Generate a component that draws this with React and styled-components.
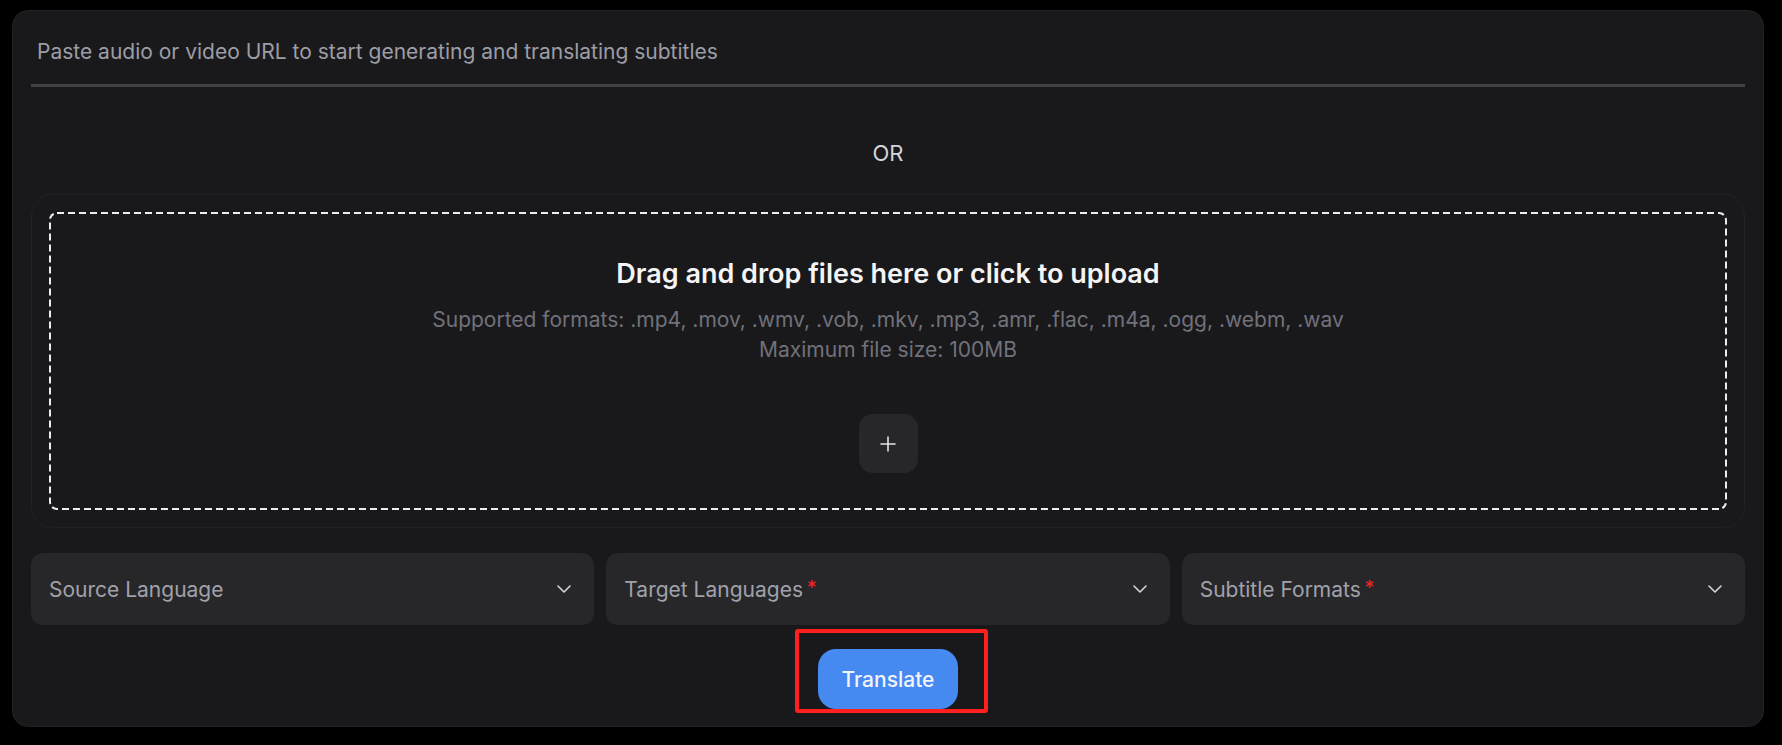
import React from 'react'
import styled, { createGlobalStyle } from 'styled-components'

const GlobalStyle = createGlobalStyle`
  html, body {
    margin: 0;
    background: #000;
  }
  body {
    padding: 10px 18px 18px 12px;
    font-family: Inter, "Noto Sans", sans-serif;
    -webkit-font-smoothing: antialiased;
  }
  * {
    box-sizing: border-box;
  }
`

const Card = styled.div`
  display: flex;
  flex-direction: column;
  height: 717px;
  padding: 18px 18px 17px;
  background: #19191c;
  border: 1px solid #222225;
  border-radius: 16px;
`

const UrlInput = styled.input`
  display: block;
  width: 100%;
  height: 61px;
  padding: 7px 6px 18px;
  font-family: inherit;
  font-size: 21px;
  line-height: 33px;
  color: #e4e4e7;
  background: transparent;
  border: none;
  border-bottom: 3px solid #3f3f46;
  outline: none;

  &::placeholder {
    color: #9d9da5;
  }
`

const OrLabel = styled.div`
  padding: 51px 0 26px;
  text-align: center;
  font-size: 22px;
  line-height: 30px;
  color: #d4d4d8;
`

const DropArea = styled.div`
  padding: 17px;
  background: #19191c;
  border: 1px solid #222226;
  border-radius: 22px;
  box-shadow: 0 -6px 14px rgba(255, 255, 255, 0.012);
`

const dashed = encodeURIComponent(
  `<svg xmlns='http://www.w3.org/2000/svg' width='100%' height='100%'><rect x='0' y='0' width='100%' height='100%' rx='8' ry='8' fill='none' stroke='#ececef' stroke-width='4' stroke-dasharray='7 4'/></svg>`
)

const DashedZone = styled.div`
  display: flex;
  flex-direction: column;
  align-items: center;
  height: 298px;
  padding: 46px 20px 0;
  border-radius: 8px;
  background-image: url("data:image/svg+xml,${dashed}");
  cursor: pointer;
`

const DropTitle = styled.div`
  font-size: 27px;
  line-height: 32px;
  font-weight: 600;
  color: #f4f4f5;
`

const DropHint = styled.div`
  margin-top: 15px;
  font-size: 21px;
  line-height: 30px;
  color: #71717a;
  text-align: center;
`

const AddButton = styled.button`
  display: flex;
  align-items: center;
  justify-content: center;
  width: 59px;
  height: 59px;
  margin-top: 49px;
  padding: 0;
  background: #27272a;
  border: none;
  border-radius: 14px;
  color: #e4e4e7;
  cursor: pointer;
`

const SelectRow = styled.div`
  display: grid;
  grid-template-columns: repeat(3, 1fr);
  gap: 12px;
  margin-top: 25px;
`

const SelectBox = styled.button`
  display: flex;
  align-items: center;
  justify-content: space-between;
  height: 72px;
  padding: 0 23px 0 18px;
  background: #27272a;
  border: none;
  border-radius: 12px;
  font-family: inherit;
  font-size: 21px;
  color: #a1a1aa;
  cursor: pointer;
`

const Required = styled.span`
  margin-left: 4px;
  color: #ff2222;
  font-size: 19px;
  vertical-align: 3px;
`

const ButtonRow = styled.div`
  display: flex;
  justify-content: center;
  margin-top: 24px;
`

const Highlight = styled.div`
  position: relative;

  &::after {
    content: '';
    position: absolute;
    top: -20px;
    bottom: -4px;
    left: -23px;
    right: -30px;
    border: 4px solid #ff1f1f;
    border-radius: 3px;
    pointer-events: none;
  }
`

const TranslateButton = styled.button`
  width: 140px;
  height: 60px;
  background: #4589f1;
  border: none;
  border-radius: 18px;
  font-family: inherit;
  font-size: 21px;
  font-weight: 500;
  color: #f2f4f8;
  cursor: pointer;
`

function Chevron() {
  return (
    <svg width="14" height="8" viewBox="0 0 14 8" fill="none">
      <polyline points="1,1 7,7 13,1" stroke="#d4d4d8" strokeWidth="1.6" strokeLinecap="round" strokeLinejoin="round" />
    </svg>
  )
}

function Plus() {
  return (
    <svg width="16" height="16" viewBox="0 0 16 16" fill="none">
      <path d="M8 1v14M1 8h14" stroke="#e4e4e7" strokeWidth="1.6" strokeLinecap="round" />
    </svg>
  )
}

function Select({ label, required }) {
  return (
    <SelectBox type="button">
      <span>
        {label}
        {required && <Required>*</Required>}
      </span>
      <Chevron />
    </SelectBox>
  )
}

export default function App() {
  return (
    <>
      <GlobalStyle />
      <Card>
        <UrlInput placeholder="Paste audio or video URL to start generating and translating subtitles" />
        <OrLabel>OR</OrLabel>
        <DropArea>
          <DashedZone>
            <DropTitle>Drag and drop files here or click to upload</DropTitle>
            <DropHint>
              Supported formats: .mp4, .mov, .wmv, .vob, .mkv, .mp3, .amr, .flac, .m4a, .ogg, .webm, .wav
              <br />
              Maximum file size: 100MB
            </DropHint>
            <AddButton type="button" aria-label="Add file">
              <Plus />
            </AddButton>
          </DashedZone>
        </DropArea>
        <SelectRow>
          <Select label="Source Language" />
          <Select label="Target Languages" required />
          <Select label="Subtitle Formats" required />
        </SelectRow>
        <ButtonRow>
          <Highlight>
            <TranslateButton type="button">Translate</TranslateButton>
          </Highlight>
        </ButtonRow>
      </Card>
    </>
  )
}
